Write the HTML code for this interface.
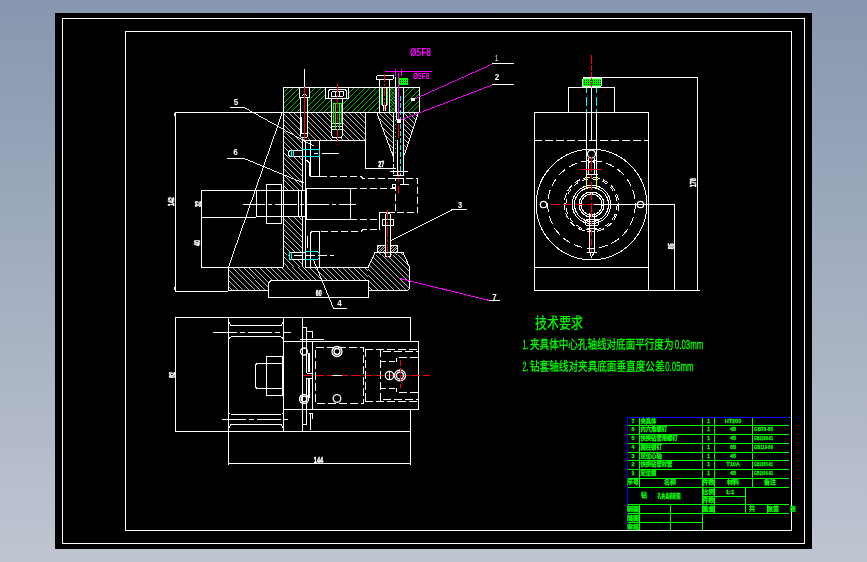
<!DOCTYPE html>
<html lang="zh"><head><meta charset="utf-8"><title>钻孔夹具装配图</title>
<style>html,body{margin:0;padding:0;background:#8798b1;overflow:hidden}svg{display:block;will-change:transform}</style></head>
<body>
<svg width="867" height="562" viewBox="0 0 867 562" shape-rendering="crispEdges" font-family="'Liberation Sans','Noto Sans CJK SC',sans-serif" fill="none" stroke-width="1">
<defs>
<linearGradient id="bg" x1="0" y1="0" x2="0" y2="1"><stop offset="0" stop-color="#8797af"/><stop offset="1" stop-color="#bfc5d1"/></linearGradient>
<pattern id="kn" width="2" height="2" patternUnits="userSpaceOnUse"><rect width="2" height="2" fill="#0f0"/><rect width="1" height="1" fill="#040"/></pattern><clipPath id="c1"><polygon points="283,87 419,87 419,112 283,112"/></clipPath><clipPath id="c2"><polygon points="390,87 396,87 396,112 390,112"/></clipPath><clipPath id="c3"><polygon points="283,112 365,112 365,140 302,140 302,190 283,190"/></clipPath><clipPath id="c4"><polygon points="283,217 302,217 302,267 283,267"/></clipPath><clipPath id="c5"><polygon points="228,267 368,267 368,281 271,281 268.5,283 268.5,291 228,291"/></clipPath><clipPath id="c6"><polygon points="368,267 375,252.5 403,252.5 410,267 410,289 408,291 368,291"/></clipPath><clipPath id="c7"><polygon points="376,112 393.5,112 393.5,157"/></clipPath><clipPath id="c8"><polygon points="404,112 419,112 404.5,155"/></clipPath><clipPath id="c9"><polygon points="377,245 385,245 385,252 377,252"/></clipPath><clipPath id="c10"><polygon points="390,245 397,245 397,252 390,252"/></clipPath></defs>
<rect width="867" height="562" fill="url(#bg)"/>
<rect x="55" y="13" width="757" height="536" fill="#000"/>
<rect x="62.5" y="18.5" width="742" height="525" stroke="#fff" fill="none"/>
<rect x="125.5" y="31.5" width="666" height="499" stroke="#fff" fill="none"/>
<path clip-path="url(#c1)" d="M252.50,112l25,-25M258.00,112l25,-25M263.50,112l25,-25M269.00,112l25,-25M274.50,112l25,-25M280.00,112l25,-25M285.50,112l25,-25M291.00,112l25,-25M296.50,112l25,-25M302.00,112l25,-25M307.50,112l25,-25M313.00,112l25,-25M318.50,112l25,-25M324.00,112l25,-25M329.50,112l25,-25M335.00,112l25,-25M340.50,112l25,-25M346.00,112l25,-25M351.50,112l25,-25M357.00,112l25,-25M362.50,112l25,-25M368.00,112l25,-25M373.50,112l25,-25M379.00,112l25,-25M384.50,112l25,-25M390.00,112l25,-25M395.50,112l25,-25M401.00,112l25,-25M406.50,112l25,-25M412.00,112l25,-25M417.50,112l25,-25M423.00,112l25,-25M428.50,112l25,-25M434.00,112l25,-25M439.50,112l25,-25M445.00,112l25,-25" stroke="#0f0" stroke-width="0.72"/>
<rect x="300" y="88" width="10" height="10" fill="#000"/><rect x="301" y="97" width="7" height="15" fill="#000"/>
<rect x="326" y="88" width="23" height="11" fill="#000"/>
<rect x="332" y="98" width="11" height="14" fill="#000"/>
<rect x="380" y="88" width="9" height="24" fill="#000"/>
<rect x="394" y="88" width="10" height="24" fill="#000"/>
<path clip-path="url(#c2)" d="M361.80,87l25,25M365.00,87l25,25M368.20,87l25,25M371.40,87l25,25M374.60,87l25,25M377.80,87l25,25M381.00,87l25,25M384.20,87l25,25M387.40,87l25,25M390.60,87l25,25M393.80,87l25,25M397.00,87l25,25M400.20,87l25,25M403.40,87l25,25M406.60,87l25,25M409.80,87l25,25M413.00,87l25,25M416.20,87l25,25M419.40,87l25,25M422.60,87l25,25" stroke="#0f0" stroke-width="0.72"/>
<path clip-path="url(#c3)" d="M199.50,112l78,78M205.00,112l78,78M210.50,112l78,78M216.00,112l78,78M221.50,112l78,78M227.00,112l78,78M232.50,112l78,78M238.00,112l78,78M243.50,112l78,78M249.00,112l78,78M254.50,112l78,78M260.00,112l78,78M265.50,112l78,78M271.00,112l78,78M276.50,112l78,78M282.00,112l78,78M287.50,112l78,78M293.00,112l78,78M298.50,112l78,78M304.00,112l78,78M309.50,112l78,78M315.00,112l78,78M320.50,112l78,78M326.00,112l78,78M331.50,112l78,78M337.00,112l78,78M342.50,112l78,78M348.00,112l78,78M353.50,112l78,78M359.00,112l78,78M364.50,112l78,78M370.00,112l78,78M375.50,112l78,78M381.00,112l78,78M386.50,112l78,78M392.00,112l78,78M397.50,112l78,78M403.00,112l78,78M408.50,112l78,78M414.00,112l78,78M419.50,112l78,78M425.00,112l78,78M430.50,112l78,78M436.00,112l78,78M441.50,112l78,78M447.00,112l78,78" stroke="#fff" stroke-width="0.72"/>
<rect x="301" y="112" width="7" height="26" fill="#000"/>
<rect x="332" y="112" width="11" height="25" fill="#000"/>
<path clip-path="url(#c4)" d="M227.50,217l50,50M233.00,217l50,50M238.50,217l50,50M244.00,217l50,50M249.50,217l50,50M255.00,217l50,50M260.50,217l50,50M266.00,217l50,50M271.50,217l50,50M277.00,217l50,50M282.50,217l50,50M288.00,217l50,50M293.50,217l50,50M299.00,217l50,50M304.50,217l50,50M310.00,217l50,50M315.50,217l50,50M321.00,217l50,50M326.50,217l50,50M332.00,217l50,50M337.50,217l50,50M343.00,217l50,50M348.50,217l50,50M354.00,217l50,50" stroke="#fff" stroke-width="0.72"/>
<rect x="289" y="150" width="14" height="7" fill="#000"/>
<rect x="289" y="252" width="14" height="8" fill="#000"/>
<path clip-path="url(#c5)" d="M198.50,267l24,24M204.00,267l24,24M209.50,267l24,24M215.00,267l24,24M220.50,267l24,24M226.00,267l24,24M231.50,267l24,24M237.00,267l24,24M242.50,267l24,24M248.00,267l24,24M253.50,267l24,24M259.00,267l24,24M264.50,267l24,24M270.00,267l24,24M275.50,267l24,24M281.00,267l24,24M286.50,267l24,24M292.00,267l24,24M297.50,267l24,24M303.00,267l24,24M308.50,267l24,24M314.00,267l24,24M319.50,267l24,24M325.00,267l24,24M330.50,267l24,24M336.00,267l24,24M341.50,267l24,24M347.00,267l24,24M352.50,267l24,24M358.00,267l24,24M363.50,267l24,24M369.00,267l24,24M374.50,267l24,24M380.00,267l24,24M385.50,267l24,24M391.00,267l24,24M396.50,267l24,24" stroke="#fff" stroke-width="0.72"/>
<path clip-path="url(#c6)" d="M324.00,252.5l38.5,38.5M329.50,252.5l38.5,38.5M335.00,252.5l38.5,38.5M340.50,252.5l38.5,38.5M346.00,252.5l38.5,38.5M351.50,252.5l38.5,38.5M357.00,252.5l38.5,38.5M362.50,252.5l38.5,38.5M368.00,252.5l38.5,38.5M373.50,252.5l38.5,38.5M379.00,252.5l38.5,38.5M384.50,252.5l38.5,38.5M390.00,252.5l38.5,38.5M395.50,252.5l38.5,38.5M401.00,252.5l38.5,38.5M406.50,252.5l38.5,38.5M412.00,252.5l38.5,38.5M417.50,252.5l38.5,38.5M423.00,252.5l38.5,38.5M428.50,252.5l38.5,38.5M434.00,252.5l38.5,38.5M439.50,252.5l38.5,38.5M445.00,252.5l38.5,38.5M450.50,252.5l38.5,38.5" stroke="#fff" stroke-width="0.72"/>
<rect x="385" y="252" width="6" height="5" fill="#000"/>
<path clip-path="url(#c7)" d="M325.80,112l45,45M331.00,112l45,45M336.20,112l45,45M341.40,112l45,45M346.60,112l45,45M351.80,112l45,45M357.00,112l45,45M362.20,112l45,45M367.40,112l45,45M372.60,112l45,45M377.80,112l45,45M383.00,112l45,45M388.20,112l45,45M393.40,112l45,45M398.60,112l45,45M403.80,112l45,45M409.00,112l45,45M414.20,112l45,45M419.40,112l45,45M424.60,112l45,45M429.80,112l45,45M435.00,112l45,45M440.20,112l45,45" stroke="#fff" stroke-width="0.72"/>
<path clip-path="url(#c8)" d="M355.80,112l43,43M361.00,112l43,43M366.20,112l43,43M371.40,112l43,43M376.60,112l43,43M381.80,112l43,43M387.00,112l43,43M392.20,112l43,43M397.40,112l43,43M402.60,112l43,43M407.80,112l43,43M413.00,112l43,43M418.20,112l43,43M423.40,112l43,43M428.60,112l43,43M433.80,112l43,43M439.00,112l43,43M444.20,112l43,43M449.40,112l43,43M454.60,112l43,43M459.80,112l43,43M465.00,112l43,43" stroke="#fff" stroke-width="0.72"/>
<path clip-path="url(#c9)" d="M367.40,252l7,-7M370.00,252l7,-7M372.60,252l7,-7M375.20,252l7,-7M377.80,252l7,-7M380.40,252l7,-7M383.00,252l7,-7M385.60,252l7,-7M388.20,252l7,-7M390.80,252l7,-7M393.40,252l7,-7" stroke="#fff" stroke-width="0.72"/>
<path clip-path="url(#c10)" d="M380.40,252l7,-7M383.00,252l7,-7M385.60,252l7,-7M388.20,252l7,-7M390.80,252l7,-7M393.40,252l7,-7M396.00,252l7,-7M398.60,252l7,-7M401.20,252l7,-7M403.80,252l7,-7M406.40,252l7,-7" stroke="#fff" stroke-width="0.72"/>
<rect x="283.5" y="87.5" width="136" height="25" stroke="#fff" fill="none"/>
<line x1="283.5" y1="112" x2="283.5" y2="267" stroke="#fff"/>
<line x1="302" y1="140.5" x2="365" y2="140.5" stroke="#fff"/>
<line x1="365.5" y1="112" x2="365.5" y2="168" stroke="#fff"/>
<line x1="365" y1="168.5" x2="396" y2="168.5" stroke="#fff"/>
<text x="381.3" y="167.3" font-size="9" fill="#fff" text-anchor="middle" font-weight="bold" textLength="6" lengthAdjust="spacingAndGlyphs" stroke="#fff" stroke-width="0.45">27</text>
<line x1="302.5" y1="140" x2="302.5" y2="190" stroke="#fff"/>
<line x1="302.5" y1="217" x2="302.5" y2="267" stroke="#fff"/>
<line x1="305.5" y1="140" x2="305.5" y2="267" stroke="#fff"/>
<line x1="175" y1="112.5" x2="283" y2="112.5" stroke="#fff"/>
<line x1="175.5" y1="112" x2="175.5" y2="291" stroke="#fff"/>
<line x1="175" y1="291.5" x2="228" y2="291.5" stroke="#fff"/>
<line x1="174.5" y1="113" x2="174.5" y2="116" stroke="#fff"/>
<line x1="174.5" y1="287" x2="174.5" y2="290" stroke="#fff"/>
<text x="174" y="201.7" font-size="9" fill="#fff" text-anchor="middle" font-weight="bold" textLength="9.3" lengthAdjust="spacingAndGlyphs" transform="rotate(-90 174 201.7)" stroke="#fff" stroke-width="0.45">142</text>
<line x1="201" y1="190.5" x2="256" y2="190.5" stroke="#fff"/>
<line x1="201" y1="217.5" x2="256" y2="217.5" stroke="#fff"/>
<line x1="201" y1="267.5" x2="228" y2="267.5" stroke="#fff"/>
<line x1="201.5" y1="190" x2="201.5" y2="267" stroke="#fff"/>
<text x="200.6" y="204.1" font-size="9" fill="#fff" text-anchor="middle" font-weight="bold" textLength="6" lengthAdjust="spacingAndGlyphs" transform="rotate(-90 200.6 204.1)" stroke="#fff" stroke-width="0.45">32</text>
<text x="200.4" y="243.1" font-size="9" fill="#fff" text-anchor="middle" font-weight="bold" textLength="6" lengthAdjust="spacingAndGlyphs" transform="rotate(-90 200.4 243.1)" stroke="#fff" stroke-width="0.45">40</text>
<line x1="282.5" y1="112" x2="228.5" y2="267" stroke="#fff" stroke-width="0.973"/>
<line x1="304.5" y1="69" x2="304.5" y2="87" stroke="#fff"/>
<polyline points="299.5,87.5 299.5,97.5 300.5,97.5 300.5,136 301.5,137.5 306.5,137.5 307.5,136 307.5,97.5 309.5,97.5 309.5,87.5" stroke="#fff" fill="none"/>
<line x1="300" y1="97.5" x2="309" y2="97.5" stroke="#fff"/>
<line x1="300" y1="133.5" x2="308" y2="133.5" stroke="#fff"/>
<polyline points="301.5,96.5 303.5,94.5 304.5,95.5 305.5,94.5 307.5,96.5" stroke="#fff" fill="none"/>
<line x1="301.5" y1="117" x2="301.5" y2="133" stroke="#fff"/>
<line x1="304.5" y1="87" x2="304.5" y2="140" stroke="#f00"/>
<polyline points="325.5,87.5 325.5,98.5 348.5,98.5 348.5,87.5" stroke="#fff" fill="none"/>
<polyline points="328.5,98 328.5,91 330,89.5 345,89.5 346.5,91 346.5,98" stroke="#fff" fill="none"/>
<rect x="331.5" y="91.5" width="12" height="5" stroke="#fff" fill="none" rx="1.5"/>
<line x1="335.5" y1="91" x2="335.5" y2="96" stroke="#fff"/>
<line x1="339.5" y1="91" x2="339.5" y2="96" stroke="#fff"/>
<polyline points="331.5,98.5 331.5,135.5 333,137.5 341,137.5 342.5,135.5 342.5,98.5" stroke="#fff" fill="none"/>
<line x1="332" y1="123.5" x2="343" y2="123.5" stroke="#fff"/>
<line x1="332" y1="126.5" x2="343" y2="126.5" stroke="#fff"/>
<line x1="332" y1="129.5" x2="343" y2="129.5" stroke="#fff"/>
<polyline points="333.5,124 333.5,103.5 341.5,103.5 341.5,124" stroke="#0f0" fill="none"/>
<line x1="335.5" y1="104" x2="335.5" y2="130" stroke="#0f0"/>
<line x1="339.5" y1="104" x2="339.5" y2="130" stroke="#0f0"/>
<line x1="337.5" y1="84" x2="337.5" y2="145" stroke="#f00" stroke-dasharray="9 2 2 2"/>
<rect x="376.5" y="75.5" width="17" height="4" stroke="#fff" fill="none" rx="1.5"/>
<line x1="379.5" y1="79" x2="379.5" y2="112" stroke="#fff"/>
<line x1="389.5" y1="79" x2="389.5" y2="112" stroke="#fff"/>
<polyline points="382.5,87 382.5,105.5 386.5,105.5 386.5,87" stroke="#fff" fill="none"/>
<line x1="383.5" y1="106" x2="383.5" y2="111" stroke="#fff"/>
<line x1="385.5" y1="106" x2="385.5" y2="111" stroke="#fff"/>
<line x1="384.5" y1="74" x2="384.5" y2="111" stroke="#f00" stroke-dasharray="8 2 2 2"/>
<line x1="381.5" y1="88" x2="381.5" y2="105" stroke="#0f0"/>
<line x1="387.5" y1="88" x2="387.5" y2="105" stroke="#0f0"/>
<rect x="399.5" y="78.5" width="8" height="6" rx="1" fill="url(#kn)" stroke="#0f0"/>
<line x1="395.5" y1="77" x2="395.5" y2="112" stroke="#fff"/>
<line x1="393.5" y1="112" x2="393.5" y2="157" stroke="#fff"/>
<line x1="393.5" y1="158" x2="393.5" y2="176" stroke="#fff" stroke-dasharray="4 2"/>
<line x1="396.5" y1="87" x2="396.5" y2="120" stroke="#fff"/>
<line x1="397.5" y1="140" x2="397.5" y2="175" stroke="#fff"/>
<line x1="403.5" y1="87" x2="403.5" y2="176" stroke="#fff"/>
<line x1="398.5" y1="73" x2="398.5" y2="121" stroke="#f0f"/>
<line x1="398.5" y1="124" x2="398.5" y2="140" stroke="#f00" stroke-dasharray="14 2 3 2"/>
<line x1="398.5" y1="170" x2="398.5" y2="194" stroke="#f00" stroke-dasharray="12 4 8 4"/>
<line x1="400.5" y1="96" x2="400.5" y2="176" stroke="#0ff" stroke-dasharray="5 2"/>
<line x1="395.5" y1="112" x2="395.5" y2="156" stroke="#0f0" stroke-dasharray="1 3"/>
<line x1="376.5" y1="112" x2="393.5" y2="157.5" stroke="#fff" stroke-width="0.965"/>
<line x1="418.5" y1="112" x2="404.5" y2="155" stroke="#fff" stroke-width="0.979"/>
<line x1="390" y1="171.5" x2="408" y2="171.5" stroke="#fff"/>
<line x1="393" y1="175.5" x2="404" y2="175.5" stroke="#fff"/>
<line x1="385" y1="71.5" x2="432" y2="71.5" stroke="#f0f"/>
<line x1="395.5" y1="69" x2="395.5" y2="76" stroke="#f0f"/>
<line x1="401.5" y1="69" x2="401.5" y2="76" stroke="#f0f"/>
<text x="420.5" y="56" font-size="10" fill="#f0f" text-anchor="middle" font-weight="bold" textLength="21" lengthAdjust="spacingAndGlyphs">Ø5F8</text>
<text x="421.2" y="79.3" font-size="9.5" fill="#f0f" text-anchor="middle" font-weight="bold" textLength="16.5" lengthAdjust="spacingAndGlyphs">Ø5F8</text>
<line x1="412.5" y1="99.5" x2="492.5" y2="63.5" stroke="#f0f" stroke-width="0.939"/>
<line x1="492" y1="63.5" x2="514" y2="63.5" stroke="#fff"/>
<line x1="398.5" y1="120.5" x2="492.5" y2="84.5" stroke="#f0f" stroke-width="0.962"/>
<line x1="492" y1="84.5" x2="514" y2="84.5" stroke="#fff"/>
<rect x="411" y="98" width="4" height="3" fill="#fff"/><rect x="397" y="119" width="4" height="4" rx="1" fill="#fff"/>
<text x="496.5" y="61" font-size="9" fill="#fff" text-anchor="middle" textLength="3" lengthAdjust="spacingAndGlyphs">1</text>
<text x="497" y="79.5" font-size="9" fill="#fff" text-anchor="middle" font-weight="bold" textLength="4.5" lengthAdjust="spacingAndGlyphs">2</text>
<text x="236" y="104.5" font-size="9" fill="#fff" text-anchor="middle" font-weight="bold" textLength="4.5" lengthAdjust="spacingAndGlyphs">5</text>
<line x1="230" y1="107.5" x2="244" y2="107.5" stroke="#fff"/>
<line x1="244" y1="107.5" x2="313.5" y2="146" stroke="#fff" stroke-width="0.901"/>
<text x="235.5" y="155" font-size="9" fill="#fff" text-anchor="middle" font-weight="bold" textLength="4.5" lengthAdjust="spacingAndGlyphs">6</text>
<line x1="227" y1="158.5" x2="244" y2="158.5" stroke="#fff"/>
<line x1="244" y1="158.5" x2="303.5" y2="183" stroke="#fff" stroke-width="0.952"/>
<polyline points="283,190.5 256.5,190.5 256.5,216.5 283,216.5" stroke="#fff" fill="none"/>
<rect x="266.5" y="184.5" width="15" height="39" stroke="#fff" fill="none"/>
<line x1="266" y1="190.5" x2="281" y2="190.5" stroke="#fff"/>
<line x1="266" y1="216.5" x2="281" y2="216.5" stroke="#fff"/>
<line x1="283" y1="190.5" x2="305" y2="190.5" stroke="#fff"/>
<line x1="283" y1="216.5" x2="305" y2="216.5" stroke="#fff"/>
<line x1="298.5" y1="190" x2="298.5" y2="217" stroke="#fff"/>
<line x1="301.5" y1="190" x2="301.5" y2="217" stroke="#fff"/>
<line x1="243" y1="204.5" x2="356" y2="204.5" stroke="#fff" stroke-dasharray="22 3 4 3"/>
<rect x="306.5" y="188.5" width="44" height="31" stroke="#fff" fill="none"/>
<polyline points="305,140.5 319.5,140.5 319.5,176.5 310.5,176.5 310.5,140.5" stroke="#fff" fill="none"/>
<polyline points="306.5,160 309.5,163 309.5,176" stroke="#fff" fill="none"/>
<polyline points="310.5,267 310.5,233 312,231.5 319.5,231.5 319.5,267" stroke="#fff" fill="none"/>
<line x1="307.5" y1="236" x2="307.5" y2="248" stroke="#fff"/>
<polyline points="319.5,176.5 361.5,176.5 362.5,178.5 395,178.5" stroke="#fff" fill="none" stroke-dasharray="7 3"/>
<rect x="395.5" y="178.5" width="22" height="34" stroke="#fff" fill="none" stroke-dasharray="7 3"/>
<line x1="403.5" y1="178" x2="403.5" y2="185" stroke="#fff"/>
<line x1="400" y1="184.5" x2="409" y2="184.5" stroke="#fff"/>
<rect x="392.5" y="184.5" width="3" height="3" stroke="#fff" fill="none"/>
<line x1="350" y1="188.5" x2="395" y2="188.5" stroke="#fff" stroke-dasharray="7 3"/>
<line x1="350" y1="219.5" x2="380" y2="219.5" stroke="#fff" stroke-dasharray="7 3"/>
<polyline points="379.5,230 379.5,212.5 395,212.5" stroke="#fff" fill="none"/>
<polyline points="311,231.5 361.5,231.5 362.5,229.5 380,229.5" stroke="#fff" fill="none" stroke-dasharray="7 3"/>
<polyline points="302,150.5 290,150.5 288.5,152 288.5,155 290,156.5 302,156.5" stroke="#fff" fill="none"/>
<line x1="291.5" y1="150" x2="291.5" y2="157" stroke="#0ff"/>
<line x1="293.5" y1="150" x2="293.5" y2="157" stroke="#0ff"/>
<polyline points="302,149.5 319.5,149.5 319.5,156.5 302,156.5" stroke="#0ff" fill="none"/>
<line x1="314" y1="153.5" x2="318" y2="153.5" stroke="#fff"/>
<line x1="322" y1="153.5" x2="339" y2="153.5" stroke="#fff"/>
<line x1="289" y1="252.5" x2="305" y2="252.5" stroke="#fff"/>
<line x1="289" y1="259.5" x2="305" y2="259.5" stroke="#fff"/>
<line x1="289.5" y1="252" x2="289.5" y2="260" stroke="#0ff"/>
<line x1="291.5" y1="252" x2="291.5" y2="260" stroke="#0ff"/>
<polyline points="305,251.5 317.5,251.5 319.5,253.5 319.5,257.5 317.5,259.5 305,259.5" stroke="#0ff" fill="none"/>
<line x1="294" y1="255.5" x2="334" y2="255.5" stroke="#fff" stroke-dasharray="9 3"/>
<polyline points="385.5,256.5 385.5,215 386.5,213.5 389.5,213.5 390.5,215 390.5,256.5 385.5,256.5" stroke="#fff" fill="none"/>
<rect x="382.5" y="219.5" width="11" height="6" stroke="#fff" fill="none" rx="1"/>
<line x1="387.5" y1="210" x2="387.5" y2="258" stroke="#f00" stroke-dasharray="10 2 3 2"/>
<rect x="377.5" y="245.5" width="8" height="7" stroke="#fff" fill="none"/>
<rect x="390.5" y="245.5" width="7" height="7" stroke="#fff" fill="none"/>
<line x1="390.5" y1="240.5" x2="451.5" y2="209.5" stroke="#fff" stroke-width="0.918"/>
<line x1="451" y1="209.5" x2="467" y2="209.5" stroke="#fff"/>
<text x="460" y="207.5" font-size="9" fill="#fff" text-anchor="middle" font-weight="bold" textLength="4.5" lengthAdjust="spacingAndGlyphs">3</text>
<polyline points="283,267.5 228.5,267.5 228.5,290.5 268.5,290.5" stroke="#fff" fill="none"/>
<line x1="305" y1="267.5" x2="368" y2="267.5" stroke="#fff"/>
<polyline points="368,267.5 375,252.5 403,252.5 409.5,267 409.5,288.5 407.5,290.5 368.5,290.5" stroke="#fff" fill="none"/>
<polyline points="268.5,297 268.5,283 271,280.5 368.5,280.5 368.5,297" stroke="#fff" fill="none"/>
<line x1="268" y1="297.5" x2="369" y2="297.5" stroke="#fff"/>
<text x="318.8" y="295.5" font-size="9" fill="#fff" text-anchor="middle" font-weight="bold" textLength="6" lengthAdjust="spacingAndGlyphs" stroke="#fff" stroke-width="0.45">60</text>
<line x1="399.5" y1="278.5" x2="489.5" y2="300.5" stroke="#f0f" stroke-width="1.001"/>
<line x1="489" y1="300.5" x2="500" y2="300.5" stroke="#fff"/>
<text x="494.5" y="299.5" font-size="9" fill="#fff" text-anchor="middle" font-weight="bold" textLength="4.5" lengthAdjust="spacingAndGlyphs">7</text>
<line x1="313.5" y1="260" x2="333.5" y2="308.5" stroke="#fff" stroke-width="0.952"/>
<line x1="333" y1="308.5" x2="347" y2="308.5" stroke="#fff"/>
<text x="339.5" y="306" font-size="9" fill="#fff" text-anchor="middle" font-weight="bold" textLength="4.5" lengthAdjust="spacingAndGlyphs">4</text>
<rect x="534.5" y="112.5" width="114" height="178" stroke="#fff" fill="none"/>
<line x1="534" y1="267.5" x2="648" y2="267.5" stroke="#fff"/>
<rect x="568.5" y="87.5" width="46" height="25" stroke="#fff" fill="none"/>
<rect x="582.5" y="78.5" width="19" height="8" rx="1.5" fill="url(#kn)" stroke="#cfc"/>
<line x1="591.5" y1="55" x2="591.5" y2="87" stroke="#f00" stroke-dasharray="9 1 6 1"/>
<line x1="586.5" y1="88" x2="586.5" y2="112" stroke="#0ff" stroke-dasharray="5 4 9 3"/>
<line x1="596.5" y1="88" x2="596.5" y2="112" stroke="#0ff" stroke-dasharray="5 4 9 3"/>
<line x1="586.5" y1="112" x2="586.5" y2="176" stroke="#fff"/>
<line x1="596.5" y1="112" x2="596.5" y2="176" stroke="#fff"/>
<line x1="591.5" y1="87" x2="591.5" y2="141" stroke="#fff"/>
<line x1="534" y1="140.5" x2="648" y2="140.5" stroke="#fff" stroke-dasharray="8 3"/>
<g stroke-width="1">
<circle cx="591.5" cy="204.5" r="55.3" stroke="#fff" fill="none"/>
<circle cx="591.5" cy="204.5" r="43.8" stroke="#fff" fill="none" stroke-dasharray="9 4"/>
<circle cx="591.5" cy="204.5" r="27.3" stroke="#fff" fill="none" stroke-dasharray="7 3"/>
<circle cx="591.5" cy="204.5" r="25.6" stroke="#fff" fill="none" stroke-dasharray="6 4"/>
<circle cx="591.5" cy="204.5" r="19.2" stroke="#fff" fill="none"/>
<circle cx="591.5" cy="204.5" r="17" stroke="#fff" fill="none"/>
<circle cx="591.5" cy="204.5" r="12.5" stroke="#fff" fill="none"/>
<circle cx="591.5" cy="204.5" r="10.6" stroke="#fff" fill="none"/>
<circle cx="543.5" cy="204.5" r="3.2" stroke="#fff" fill="none" shape-rendering="geometricPrecision" stroke-width="1.3"/>
<circle cx="640.5" cy="204.5" r="3.2" stroke="#fff" fill="none" shape-rendering="geometricPrecision" stroke-width="1.3"/>
<circle cx="591.5" cy="154" r="4" stroke="#fff" fill="none" shape-rendering="geometricPrecision" stroke-width="1.3"/>
</g>
<line x1="588.5" y1="158" x2="588.5" y2="174" stroke="#fff"/>
<line x1="594.5" y1="158" x2="594.5" y2="174" stroke="#fff"/>
<line x1="586" y1="174.5" x2="598" y2="174.5" stroke="#fff"/>
<polyline points="588.5,163 590,161.5 593,161.5 594.5,163" stroke="#fff" fill="none"/>
<line x1="551" y1="204.5" x2="596" y2="204.5" stroke="#f00" stroke-dasharray="9 3"/>
<line x1="594" y1="204.5" x2="674" y2="204.5" stroke="#fff"/>
<line x1="591.5" y1="157" x2="591.5" y2="253" stroke="#f00" stroke-dasharray="15 3 4 3 8 3 7 3"/>
<line x1="581" y1="169.5" x2="602" y2="169.5" stroke="#f00"/>
<polyline points="586.5,175.5 586.5,186.5 585.5,189.5" stroke="#ff0" fill="none"/>
<polyline points="596.5,175.5 596.5,186.5 597.5,189.5" stroke="#ff0" fill="none"/>
<polyline points="589.5,213 589.5,252 591.5,257 594.5,252 594.5,213" stroke="#fff" fill="none"/>
<rect x="585.5" y="219.5" width="13" height="6" stroke="#fff" fill="none" rx="2"/>
<line x1="587" y1="228.5" x2="597" y2="228.5" stroke="#fff"/>
<line x1="587" y1="252.5" x2="597" y2="252.5" stroke="#fff"/>
<line x1="583" y1="77.5" x2="697" y2="77.5" stroke="#fff"/>
<line x1="697.5" y1="77" x2="697.5" y2="290" stroke="#fff"/>
<line x1="648" y1="290.5" x2="700" y2="290.5" stroke="#fff"/>
<line x1="674.5" y1="204" x2="674.5" y2="290" stroke="#fff"/>
<text x="696.5" y="182.7" font-size="9" fill="#fff" text-anchor="middle" font-weight="bold" textLength="9.3" lengthAdjust="spacingAndGlyphs" transform="rotate(-90 696.5 182.7)" stroke="#fff" stroke-width="0.45">178</text>
<text x="673.8" y="246.3" font-size="9" fill="#fff" text-anchor="middle" font-weight="bold" textLength="6" lengthAdjust="spacingAndGlyphs" transform="rotate(-90 673.8 246.3)" stroke="#fff" stroke-width="0.45">85</text>
<line x1="175" y1="317.5" x2="410" y2="317.5" stroke="#fff"/>
<line x1="175" y1="431.5" x2="410" y2="431.5" stroke="#fff"/>
<line x1="175.5" y1="317" x2="175.5" y2="432" stroke="#fff"/>
<text x="174.6" y="375.1" font-size="9" fill="#fff" text-anchor="middle" font-weight="bold" textLength="6" lengthAdjust="spacingAndGlyphs" transform="rotate(-90 174.6 375.1)" stroke="#fff" stroke-width="0.45">82</text>
<line x1="228.5" y1="317" x2="228.5" y2="465" stroke="#fff"/>
<line x1="283.5" y1="317" x2="283.5" y2="432" stroke="#fff"/>
<line x1="302.5" y1="317" x2="302.5" y2="432" stroke="#fff"/>
<line x1="410.5" y1="317" x2="410.5" y2="342" stroke="#fff"/>
<line x1="410.5" y1="409" x2="410.5" y2="465" stroke="#fff"/>
<rect x="283.5" y="341.5" width="135" height="68" stroke="#fff" fill="none"/>
<polyline points="229,322 231,325.5 281,325.5 283,322" stroke="#fff" fill="none"/>
<line x1="213" y1="332.5" x2="291" y2="332.5" stroke="#fff" stroke-dasharray="24 3 5 3"/>
<rect x="228.5" y="336.5" width="55" height="78" stroke="#fff" fill="none" rx="4"/>
<line x1="222" y1="419.5" x2="288" y2="419.5" stroke="#fff" stroke-dasharray="24 3 5 3"/>
<polyline points="229,428 231,424.5 281,424.5 283,428" stroke="#fff" fill="none"/>
<rect x="266.5" y="356.5" width="16" height="39" stroke="#fff" fill="none"/>
<line x1="266" y1="363.5" x2="282" y2="363.5" stroke="#fff"/>
<line x1="266" y1="388.5" x2="282" y2="388.5" stroke="#fff"/>
<polyline points="266,363.5 257,363.5 255.5,365 255.5,387 257,388.5 266,388.5" stroke="#fff" fill="none"/>
<polyline points="302.5,327.5 306.5,327.5 306.5,331.5 312.5,331.5 312.5,338" stroke="#fff" fill="none"/>
<line x1="300" y1="339.5" x2="324" y2="339.5" stroke="#fff"/>
<line x1="306.5" y1="327" x2="306.5" y2="373" stroke="#fff"/>
<line x1="308.5" y1="353" x2="308.5" y2="372" stroke="#fff"/>
<line x1="309.5" y1="353" x2="309.5" y2="372" stroke="#fff"/>
<line x1="312.5" y1="342" x2="312.5" y2="409" stroke="#fff"/>
<polyline points="306.5,373.5 312,373.5" stroke="#fff" fill="none"/>
<line x1="306.5" y1="378" x2="306.5" y2="425" stroke="#fff"/>
<line x1="308.5" y1="379" x2="308.5" y2="398" stroke="#fff"/>
<line x1="309.5" y1="379" x2="309.5" y2="398" stroke="#fff"/>
<line x1="302" y1="424.5" x2="307" y2="424.5" stroke="#fff"/>
<polyline points="306.5,378.5 312,378.5" stroke="#fff" fill="none"/>
<polyline points="308.5,413 312.5,413 312.5,419" stroke="#fff" fill="none"/>
<line x1="310.5" y1="413" x2="310.5" y2="430" stroke="#fff"/>
<line x1="303" y1="375.5" x2="430" y2="375.5" stroke="#f00" stroke-dasharray="9 3"/>
<line x1="332" y1="375.5" x2="342" y2="375.5" stroke="#fff"/>
<rect x="315.5" y="347.5" width="48" height="56" stroke="#fff" fill="none" stroke-dasharray="8 3"/>
<polyline points="365,349.5 418,349.5" stroke="#fff" fill="none" stroke-dasharray="8 3"/>
<polyline points="365,401.5 418,401.5" stroke="#fff" fill="none" stroke-dasharray="8 3"/>
<line x1="365.5" y1="349" x2="365.5" y2="402" stroke="#fff" stroke-dasharray="8 3"/>
<line x1="380.5" y1="349" x2="380.5" y2="402" stroke="#fff" stroke-dasharray="8 3"/>
<line x1="380" y1="361.5" x2="396" y2="361.5" stroke="#fff" stroke-dasharray="6 3"/>
<line x1="380" y1="388.5" x2="396" y2="388.5" stroke="#fff" stroke-dasharray="6 3"/>
<polyline points="418,357.5 396.5,357.5 396.5,362" stroke="#fff" fill="none" stroke-dasharray="8 3"/>
<polyline points="418,392.5 396.5,392.5 396.5,388" stroke="#fff" fill="none" stroke-dasharray="8 3"/>
<line x1="383" y1="351.5" x2="418" y2="351.5" stroke="#fff" stroke-dasharray="8 3"/>
<line x1="383" y1="399.5" x2="418" y2="399.5" stroke="#fff" stroke-dasharray="8 3"/>
<g stroke-width="1">
<circle cx="337" cy="351.5" r="5" stroke="#fff" fill="none" shape-rendering="geometricPrecision" stroke-width="1.3"/>
<circle cx="337" cy="351.5" r="3" stroke="#fff" fill="none" shape-rendering="geometricPrecision" stroke-width="1.3"/>
<circle cx="337" cy="398.5" r="3.8" stroke="#fff" fill="none" shape-rendering="geometricPrecision" stroke-width="1.3"/>
<circle cx="304" cy="351.5" r="3.5" stroke="#fff" fill="none" shape-rendering="geometricPrecision" stroke-width="1.3"/>
<circle cx="304" cy="399" r="4.5" stroke="#fff" fill="none" shape-rendering="geometricPrecision" stroke-width="1.3"/>
<circle cx="304" cy="399" r="2.8" stroke="#fff" fill="none" shape-rendering="geometricPrecision" stroke-width="1.3"/>
<circle cx="400" cy="375.5" r="5.5" stroke="#fff" fill="none" shape-rendering="geometricPrecision" stroke-width="1.3"/>
<circle cx="400" cy="375.5" r="3.5" stroke="#fff" fill="none" shape-rendering="geometricPrecision" stroke-width="1.3"/>
<circle cx="389.5" cy="375.5" r="4.2" stroke="#fff" fill="none" shape-rendering="geometricPrecision" stroke-width="1.3"/>
</g>
<line x1="389.5" y1="371" x2="389.5" y2="380" stroke="#fff"/>
<line x1="400.5" y1="360" x2="400.5" y2="388" stroke="#f00" stroke-dasharray="6 2"/>
<line x1="228" y1="463.5" x2="411" y2="463.5" stroke="#fff"/>
<text x="318.5" y="462.5" font-size="9" fill="#fff" text-anchor="middle" font-weight="bold" textLength="9.3" lengthAdjust="spacingAndGlyphs" stroke="#fff" stroke-width="0.45">144</text>
<text x="535" y="328" font-size="14.5" fill="#0f0" text-anchor="start" textLength="48" lengthAdjust="spacingAndGlyphs" stroke="#0f0" stroke-width="0.25">技术要求</text>
<text x="522.5" y="348.5" font-size="12" fill="#0f0" text-anchor="start" textLength="6" lengthAdjust="spacingAndGlyphs" stroke="#0f0" stroke-width="0.3">1.</text>
<text x="530" y="348.5" font-size="12" fill="#0f0" text-anchor="start" textLength="143.5" lengthAdjust="spacingAndGlyphs" stroke="#0f0" stroke-width="0.3">夹具体中心孔轴线对底面平行度为</text>
<text x="674.8" y="348.5" font-size="12" fill="#0f0" text-anchor="start" textLength="28.5" lengthAdjust="spacingAndGlyphs" stroke="#0f0" stroke-width="0.3">0.03mm</text>
<text x="522.5" y="370.5" font-size="12" fill="#0f0" text-anchor="start" textLength="6" lengthAdjust="spacingAndGlyphs" stroke="#0f0" stroke-width="0.3">2.</text>
<text x="530" y="370.5" font-size="12" fill="#0f0" text-anchor="start" textLength="134.5" lengthAdjust="spacingAndGlyphs" stroke="#0f0" stroke-width="0.3">钻套轴线对夹具底面垂直度公差</text>
<text x="665.2" y="370.5" font-size="12" fill="#0f0" text-anchor="start" textLength="28.5" lengthAdjust="spacingAndGlyphs" stroke="#0f0" stroke-width="0.3">0.05mm</text>
<line x1="627" y1="425.5" x2="789" y2="425.5" stroke="#0f0"/>
<line x1="627" y1="434.5" x2="789" y2="434.5" stroke="#0f0"/>
<line x1="627" y1="443.5" x2="789" y2="443.5" stroke="#0f0"/>
<line x1="627" y1="452.5" x2="789" y2="452.5" stroke="#0f0"/>
<line x1="627" y1="460.5" x2="789" y2="460.5" stroke="#0f0"/>
<line x1="627" y1="469.5" x2="789" y2="469.5" stroke="#0f0"/>
<line x1="627" y1="478.5" x2="789" y2="478.5" stroke="#0f0"/>
<line x1="627" y1="487.5" x2="789" y2="487.5" stroke="#0f0"/>
<line x1="639.5" y1="417" x2="639.5" y2="487" stroke="#0f0"/>
<line x1="702.5" y1="417" x2="702.5" y2="487" stroke="#0f0"/>
<line x1="714.5" y1="417" x2="714.5" y2="487" stroke="#0f0"/>
<line x1="752.5" y1="417" x2="752.5" y2="487" stroke="#0f0"/>
<line x1="789.5" y1="417" x2="789.5" y2="418" stroke="#0f0"/>
<line x1="702.5" y1="487" x2="702.5" y2="530" stroke="#0f0"/>
<line x1="714.5" y1="487" x2="714.5" y2="504" stroke="#0f0"/>
<line x1="702" y1="496.5" x2="745" y2="496.5" stroke="#0f0"/>
<line x1="745.5" y1="487" x2="745.5" y2="504" stroke="#0f0"/>
<line x1="627" y1="504.5" x2="789" y2="504.5" stroke="#0f0"/>
<line x1="627" y1="513.5" x2="702" y2="513.5" stroke="#0f0"/>
<line x1="627" y1="522.5" x2="702" y2="522.5" stroke="#0f0"/>
<line x1="639.5" y1="504" x2="639.5" y2="530" stroke="#0f0"/>
<line x1="670.5" y1="504" x2="670.5" y2="530" stroke="#0f0"/>
<line x1="767.5" y1="504" x2="767.5" y2="513" stroke="#0f0"/>
<line x1="745.5" y1="504" x2="745.5" y2="513" stroke="#0f0"/>
<line x1="714.5" y1="504" x2="714.5" y2="513" stroke="#0f0"/>
<line x1="702" y1="513.5" x2="789" y2="513.5" stroke="#0f0"/>
<line x1="627" y1="417.5" x2="789" y2="417.5" stroke="#00f"/>
<line x1="627.5" y1="417" x2="627.5" y2="530" stroke="#00f"/>
<text x="633" y="423.1" font-size="5.5" fill="#0f0" text-anchor="middle" font-weight="bold" stroke="#0f0" stroke-width="0.3">7</text>
<text x="640.5" y="423.1" font-size="6" fill="#0f0" text-anchor="start" font-weight="bold" textLength="15.9" lengthAdjust="spacingAndGlyphs" stroke="#0f0" stroke-width="0.3">夹具体</text>
<text x="708.5" y="423.1" font-size="5.5" fill="#0f0" text-anchor="middle" font-weight="bold" stroke="#0f0" stroke-width="0.3">1</text>
<text x="733" y="423.1" font-size="5.5" fill="#0f0" text-anchor="middle" font-weight="bold" stroke="#0f0" stroke-width="0.3">HT200</text>
<text x="633" y="431.1" font-size="5.5" fill="#0f0" text-anchor="middle" font-weight="bold" stroke="#0f0" stroke-width="0.3">6</text>
<text x="640.5" y="431.1" font-size="6" fill="#0f0" text-anchor="start" font-weight="bold" textLength="26.5" lengthAdjust="spacingAndGlyphs" stroke="#0f0" stroke-width="0.3">内六角螺钉</text>
<text x="708.5" y="431.1" font-size="5.5" fill="#0f0" text-anchor="middle" font-weight="bold" stroke="#0f0" stroke-width="0.3">1</text>
<text x="733" y="431.1" font-size="5.5" fill="#0f0" text-anchor="middle" font-weight="bold" stroke="#0f0" stroke-width="0.3">45</text>
<text x="754" y="431.1" font-size="5.5" fill="#0f0" text-anchor="start" font-weight="bold" textLength="19" lengthAdjust="spacingAndGlyphs" stroke="#0f0" stroke-width="0.3">GB70-85</text>
<text x="633" y="440.1" font-size="5.5" fill="#0f0" text-anchor="middle" font-weight="bold" stroke="#0f0" stroke-width="0.3">5</text>
<text x="640.5" y="440.1" font-size="6" fill="#0f0" text-anchor="start" font-weight="bold" textLength="37.1" lengthAdjust="spacingAndGlyphs" stroke="#0f0" stroke-width="0.3">快换钻套用螺钉</text>
<text x="708.5" y="440.1" font-size="5.5" fill="#0f0" text-anchor="middle" font-weight="bold" stroke="#0f0" stroke-width="0.3">1</text>
<text x="733" y="440.1" font-size="5.5" fill="#0f0" text-anchor="middle" font-weight="bold" stroke="#0f0" stroke-width="0.3">45</text>
<text x="754" y="440.1" font-size="5.5" fill="#0f0" text-anchor="start" font-weight="bold" textLength="19" lengthAdjust="spacingAndGlyphs" stroke="#0f0" stroke-width="0.3">GB2268-91</text>
<text x="633" y="449.1" font-size="5.5" fill="#0f0" text-anchor="middle" font-weight="bold" stroke="#0f0" stroke-width="0.3">4</text>
<text x="640.5" y="449.1" font-size="6" fill="#0f0" text-anchor="start" font-weight="bold" textLength="21.2" lengthAdjust="spacingAndGlyphs" stroke="#0f0" stroke-width="0.3">圆柱销钉</text>
<text x="708.5" y="449.1" font-size="5.5" fill="#0f0" text-anchor="middle" font-weight="bold" stroke="#0f0" stroke-width="0.3">1</text>
<text x="733" y="449.1" font-size="5.5" fill="#0f0" text-anchor="middle" font-weight="bold" stroke="#0f0" stroke-width="0.3">65</text>
<text x="754" y="449.1" font-size="5.5" fill="#0f0" text-anchor="start" font-weight="bold" textLength="19" lengthAdjust="spacingAndGlyphs" stroke="#0f0" stroke-width="0.3">GB119-86</text>
<text x="633" y="458.1" font-size="5.5" fill="#0f0" text-anchor="middle" font-weight="bold" stroke="#0f0" stroke-width="0.3">3</text>
<text x="640.5" y="458.1" font-size="6" fill="#0f0" text-anchor="start" font-weight="bold" textLength="21.2" lengthAdjust="spacingAndGlyphs" stroke="#0f0" stroke-width="0.3">定位心轴</text>
<text x="708.5" y="458.1" font-size="5.5" fill="#0f0" text-anchor="middle" font-weight="bold" stroke="#0f0" stroke-width="0.3">1</text>
<text x="733" y="458.1" font-size="5.5" fill="#0f0" text-anchor="middle" font-weight="bold" stroke="#0f0" stroke-width="0.3">45</text>
<text x="633" y="466.1" font-size="5.5" fill="#0f0" text-anchor="middle" font-weight="bold" stroke="#0f0" stroke-width="0.3">2</text>
<text x="640.5" y="466.1" font-size="6" fill="#0f0" text-anchor="start" font-weight="bold" textLength="31.8" lengthAdjust="spacingAndGlyphs" stroke="#0f0" stroke-width="0.3">快换钻套衬套</text>
<text x="708.5" y="466.1" font-size="5.5" fill="#0f0" text-anchor="middle" font-weight="bold" stroke="#0f0" stroke-width="0.3">1</text>
<text x="733" y="466.1" font-size="5.5" fill="#0f0" text-anchor="middle" font-weight="bold" stroke="#0f0" stroke-width="0.3">T10A</text>
<text x="754" y="466.1" font-size="5.5" fill="#0f0" text-anchor="start" font-weight="bold" textLength="19" lengthAdjust="spacingAndGlyphs" stroke="#0f0" stroke-width="0.3">GB2265-91</text>
<text x="633" y="475.1" font-size="5.5" fill="#0f0" text-anchor="middle" font-weight="bold" stroke="#0f0" stroke-width="0.3">1</text>
<text x="640.5" y="475.1" font-size="6" fill="#0f0" text-anchor="start" font-weight="bold" textLength="15.9" lengthAdjust="spacingAndGlyphs" stroke="#0f0" stroke-width="0.3">定位键</text>
<text x="708.5" y="475.1" font-size="5.5" fill="#0f0" text-anchor="middle" font-weight="bold" stroke="#0f0" stroke-width="0.3">1</text>
<text x="733" y="475.1" font-size="5.5" fill="#0f0" text-anchor="middle" font-weight="bold" stroke="#0f0" stroke-width="0.3">45</text>
<text x="754" y="475.1" font-size="5.5" fill="#0f0" text-anchor="start" font-weight="bold" textLength="19" lengthAdjust="spacingAndGlyphs" stroke="#0f0" stroke-width="0.3">GB2206-91</text>
<text x="633" y="484.2" font-size="6" fill="#0f0" text-anchor="middle" font-weight="bold" stroke="#0f0" stroke-width="0.3">序号</text>
<text x="670" y="484.2" font-size="6" fill="#0f0" text-anchor="middle" font-weight="bold" stroke="#0f0" stroke-width="0.3">名称</text>
<text x="708.5" y="484.2" font-size="6" fill="#0f0" text-anchor="middle" font-weight="bold" stroke="#0f0" stroke-width="0.3">件数</text>
<text x="733" y="484.2" font-size="6" fill="#0f0" text-anchor="middle" font-weight="bold" stroke="#0f0" stroke-width="0.3">材料</text>
<text x="770" y="484.2" font-size="6" fill="#0f0" text-anchor="middle" font-weight="bold" stroke="#0f0" stroke-width="0.3">备注</text>
<text x="708.5" y="493.8" font-size="6" fill="#0f0" text-anchor="middle" font-weight="bold" stroke="#0f0" stroke-width="0.3">比例</text>
<text x="730" y="493.8" font-size="6" fill="#0f0" text-anchor="middle" font-weight="bold" stroke="#0f0" stroke-width="0.3">1:1</text>
<text x="708.5" y="502.3" font-size="6" fill="#0f0" text-anchor="middle" font-weight="bold" stroke="#0f0" stroke-width="0.3">件数</text>
<text x="644" y="496.5" font-size="6" fill="#0f0" text-anchor="middle" font-weight="bold" stroke="#0f0" stroke-width="0.3">钻</text>
<text x="669" y="497.5" font-size="6" fill="#0f0" text-anchor="middle" font-weight="bold" textLength="23" lengthAdjust="spacingAndGlyphs" stroke="#0f0" stroke-width="0.3">孔夹具装配图</text>
<text x="633" y="511.2" font-size="6" fill="#0f0" text-anchor="middle" font-weight="bold" stroke="#0f0" stroke-width="0.3">制图</text>
<text x="633" y="520.2" font-size="6" fill="#0f0" text-anchor="middle" font-weight="bold" stroke="#0f0" stroke-width="0.3">描图</text>
<text x="633" y="528.6" font-size="6" fill="#0f0" text-anchor="middle" font-weight="bold" stroke="#0f0" stroke-width="0.3">审核</text>
<text x="708.5" y="511.2" font-size="6" fill="#0f0" text-anchor="middle" font-weight="bold" stroke="#0f0" stroke-width="0.3">重量</text>
<text x="752" y="511.2" font-size="6.5" fill="#0f0" text-anchor="middle" stroke="#0f0" stroke-width="0.3">共</text>
<text x="773" y="511.2" font-size="6" fill="#0f0" text-anchor="middle" font-weight="bold" stroke="#0f0" stroke-width="0.3">张第</text>
<text x="793" y="511.2" font-size="6" fill="#0f0" text-anchor="middle" font-weight="bold" stroke="#0f0" stroke-width="0.3">张</text>
</svg>
</body></html>
